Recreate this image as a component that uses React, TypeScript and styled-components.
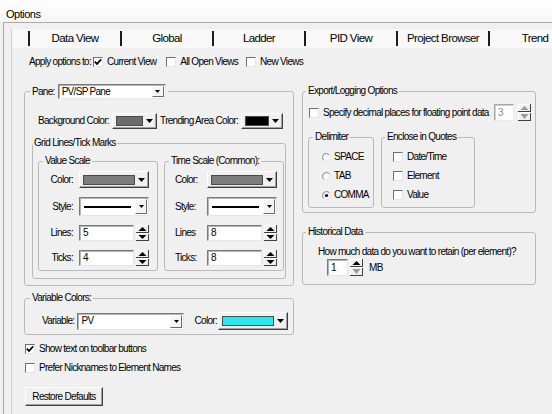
import React from "react";
import styled, { createGlobalStyle } from "styled-components";

const FONT = `"Liberation Sans", Arial, sans-serif`;

const GlobalStyle = createGlobalStyle`
  * { box-sizing: border-box; }
  html, body { margin: 0; padding: 0; }
  body {
    width: 552px;
    height: 414px;
    overflow: hidden;
    background: #f0f0f0;
    color: #000;
    font-family: ${FONT};
    font-size: 10px;
    letter-spacing: -0.7px;
    line-height: 14px;
  }
`;

const Window = styled.div`
  width: 552px;
  height: 414px;
  display: flex;
  flex-direction: column;
  overflow: hidden;
`;

const TitleBar = styled.div`
  flex: none;
  height: 22px;
  padding: 7px 0 0 6px;
  background: linear-gradient(#ffffff, #f6f6f6);
  font-size: 11px;
  letter-spacing: -0.5px;
  line-height: 14px;
`;

const Frame = styled.div`
  flex: 1;
  min-height: 0;
  margin-left: 3px;
  border-top: 1px solid #a9a9a9;
  border-left: 1px solid #a9a9a9;
  padding: 6px 0 0 7px;
  display: flex;
  flex-direction: column;
`;

const TabControl = styled.div`
  flex: 1;
  min-height: 0;
  border-left: 1px solid #cfcfcf;
  display: flex;
  flex-direction: column;
`;

const TabStrip = styled.div`
  flex: none;
  height: 19px;
  display: flex;
  padding-left: 16px;
  background: #f8f8f8;
  overflow: hidden;
  white-space: nowrap;
`;

const Tab = styled.div`
  flex: none;
  width: 92px;
  height: 15px;
  margin-top: 2px;
  border-left: 2px solid #1c1c1c;
  font-size: 11.5px;
  letter-spacing: -0.6px;
  line-height: 15px;
  text-align: center;
`;

const Page = styled.div`
  flex: 1;
  padding-top: 7px;
`;

const ApplyRow = styled.div`
  height: 14px;
  display: flex;
  align-items: center;
  padding-left: 17px;
`;

const CheckItem = styled.label<{ $ml?: number }>`
  display: inline-flex;
  align-items: center;
  gap: 4px;
  height: 14px;
  margin-left: ${(p) => p.$ml ?? 0}px;
  white-space: nowrap;
`;

const Box = styled.span`
  flex: none;
  width: 10px;
  height: 10px;
  display: inline-flex;
  align-items: center;
  justify-content: center;
  background: #fff;
  border: 1px solid;
  border-color: #6e6e6e #e4e4e4 #e4e4e4 #6e6e6e;
`;

const Columns = styled.div`
  display: flex;
  gap: 8px;
  margin-top: 15px;
  padding-left: 12px;
`;

const Column = styled.div<{ $w: number }>`
  flex: none;
  width: ${(p) => p.$w}px;
  display: flex;
  flex-direction: column;
`;

const Group = styled.fieldset<{ $w?: number; $mt?: number }>`
  flex: none;
  margin: ${(p) => p.$mt ?? 0}px 0 0 0;
  padding: 0;
  min-width: 0;
  ${(p) => (p.$w ? `width: ${p.$w}px;` : "")}
  border: 1px solid #bababa;
  border-radius: 3px;
`;

const Legend = styled.legend<{ $ml: number; $pad?: number }>`
  margin-left: ${(p) => p.$ml}px;
  padding: 0 ${(p) => p.$pad ?? 2}px;
  line-height: 14px;
  white-space: nowrap;
`;

const LegendRow = styled.span`
  display: flex;
  align-items: center;
  gap: 3px;
  height: 15px;
`;

const PaneBody = styled.div`
  padding: 14px 7px 6px 7px;
`;

const BgRow = styled.div`
  height: 16px;
  display: flex;
  align-items: center;
  padding: 0 3px 0 6px;
`;

const InlineLabel = styled.span<{ $ml?: number; $mr?: number; $push?: boolean }>`
  white-space: nowrap;
  margin-left: ${(p) => (p.$push ? "auto" : `${p.$ml ?? 0}px`)};
  margin-right: ${(p) => p.$mr ?? 0}px;
`;

const GridBody = styled.div`
  display: flex;
  gap: 6px;
  padding: 4px 3px 7px 5px;
`;

const ScaleBody = styled.div<{ $labelW: number }>`
  display: grid;
  grid-template-columns: ${(p) => p.$labelW}px 70px;
  column-gap: 6px;
  row-gap: 9px;
  align-items: center;
  padding: 3px 0 4px 0;
`;

const RowLabel = styled.span<{ $align: "left" | "right" }>`
  white-space: nowrap;
  text-align: ${(p) => p.$align};
  padding-left: ${(p) => (p.$align === "left" ? 10 : 0)}px;
`;

const ColorButton = styled.div<{ $w: number; $h: number }>`
  flex: none;
  width: ${(p) => p.$w}px;
  height: ${(p) => p.$h}px;
  display: flex;
  align-items: center;
  padding-left: 3px;
  background: #f0f0f0;
  border: 1px solid;
  border-color: #ffffff #404040 #404040 #ffffff;
  box-shadow: inset -1px -1px 0 #a0a0a0;
`;

const Swatch = styled.span<{ $c: string }>`
  flex: 1;
  height: 10px;
  background: ${(p) => p.$c};
  border: 1px solid #4a4a4a;
`;

const ArrowCell = styled.span`
  flex: none;
  width: 13px;
  display: flex;
  justify-content: center;
`;

const Combo = styled.div<{ $w: number; $h: number }>`
  flex: none;
  width: ${(p) => p.$w}px;
  height: ${(p) => p.$h}px;
  display: flex;
  align-items: center;
  background: #fff;
  border: 1px solid;
  border-color: #7a7a7a #e6e6e6 #e6e6e6 #7a7a7a;
  box-shadow: inset 1px 1px 0 #b4b4b4;
  padding: 1px 1px 1px 3px;
`;

const ComboText = styled.span`
  flex: 1;
  min-width: 0;
  white-space: nowrap;
  overflow: hidden;
`;

const LineSample = styled.span`
  flex: 1;
  height: 2px;
  margin: 0 4px 0 1px;
  background: #000;
`;

const DropBtn = styled.span`
  flex: none;
  width: 12px;
  align-self: stretch;
  display: flex;
  align-items: center;
  justify-content: center;
  background: #f4f4f4;
  border: 1px solid;
  border-color: #ffffff #6a6a6a #6a6a6a #ffffff;
`;

const SpinGroup = styled.div<{ $gap?: number; $auto?: boolean }>`
  display: flex;
  align-items: center;
  gap: ${(p) => p.$gap ?? 2}px;
  ${(p) => (p.$auto ? "margin-left: auto;" : "")}
`;

const Field = styled.div<{ $w: number; $h: number; $disabled?: boolean }>`
  flex: none;
  width: ${(p) => p.$w}px;
  height: ${(p) => p.$h}px;
  background: #fff;
  border: 1px solid;
  border-color: ${(p) => (p.$disabled ? "#a8a8a8 #ececec #ececec #a8a8a8" : "#7a7a7a #e6e6e6 #e6e6e6 #7a7a7a")};
  box-shadow: inset 1px 1px 0 ${(p) => (p.$disabled ? "#d0d0d0" : "#b4b4b4")};
  padding-left: 3px;
  line-height: ${(p) => p.$h - 2}px;
  color: ${(p) => (p.$disabled ? "#8a8a8a" : "#000")};
`;

const SpinBox = styled.span`
  flex: none;
  display: inline-flex;
`;

const VarBody = styled.div`
  height: 29px;
  display: flex;
  align-items: center;
  padding: 7px 5px 4px 17px;
`;

const CheckList = styled.div`
  display: flex;
  flex-direction: column;
  gap: 5px;
  margin-top: 7px;
  padding-left: 1px;
`;

const PushButton = styled.button`
  width: 78px;
  height: 19px;
  margin: 12px 0 0 1px;
  padding: 0;
  font: inherit;
  letter-spacing: inherit;
  white-space: nowrap;
  color: #000;
  background: #f0f0f0;
  border: 1px solid;
  border-color: #ffffff #404040 #404040 #ffffff;
  box-shadow: inset -1px -1px 0 #a0a0a0;
`;

const ExportBody = styled.div`
  padding: 6px 0 4px 5px;
`;

const DecimalRow = styled.div`
  height: 17px;
  display: flex;
  align-items: center;
  padding: 0 4px 0 1px;
`;

const SubGroups = styled.div`
  display: flex;
  gap: 7px;
  margin-top: 9px;
`;

const SubBody = styled.div<{ $pl: number }>`
  display: flex;
  flex-direction: column;
  gap: 5px;
  padding: 6px 0 5px ${(p) => p.$pl}px;
`;

const OptionRow = styled.div`
  height: 14px;
  display: flex;
  align-items: center;
  gap: 3px;
  white-space: nowrap;
`;

const HistBody = styled.div`
  padding: 6px 0 8px 15px;
`;

const HistText = styled.div`
  height: 14px;
  white-space: nowrap;
`;

const HistSpinRow = styled.div`
  height: 17px;
  display: flex;
  align-items: center;
  gap: 2px;
  padding-left: 9px;
`;

/* ---------- drawings ---------- */

const Tri = ({ w = 7, h = 4, color = "#000" }: { w?: number; h?: number; color?: string }) => (
  <svg width={w} height={h} viewBox={`0 0 ${w} ${h}`} style={{ display: "block" }}>
    <polygon points={`0,0 ${w},0 ${w / 2},${h}`} fill={color} />
  </svg>
);

const CheckMark = () => (
  <svg width="8" height="8" viewBox="0 0 8 8" style={{ display: "block" }}>
    <path d="M0.8 3.6 L3 5.9 L7.2 1.4" stroke="#000" strokeWidth="1.7" fill="none" />
  </svg>
);

const Checkbox = ({ checked }: { checked?: boolean }) => <Box>{checked && <CheckMark />}</Box>;

const Radio = ({ checked }: { checked?: boolean }) => (
  <svg width="9" height="9" viewBox="0 0 9 9" style={{ display: "block", flex: "none" }}>
    <circle cx="4.5" cy="4.5" r="4" fill="#f7f7f7" />
    <path d="M7.33 1.67 A4 4 0 0 0 1.67 7.33" stroke="#7e7e7e" strokeWidth="1" fill="none" />
    <path d="M1.67 7.33 A4 4 0 0 0 7.33 1.67" stroke="#e2e2e2" strokeWidth="1" fill="none" />
    {checked && <circle cx="4.5" cy="4.5" r="1.6" fill="#000" />}
  </svg>
);

const Spinner = ({ h = 16, up = "#000", down = "#000" }: { h?: number; up?: string; down?: string }) => {
  const mid = Math.floor(h / 2);
  return (
    <SpinBox>
      <svg width="13" height={h} viewBox={`0 0 13 ${h}`} style={{ display: "block" }}>
        <rect x="0" y="0" width="13" height={h} fill="#f0f0f0" />
        <line x1="0" y1="0.5" x2="13" y2="0.5" stroke="#ffffff" />
        <line x1="0.5" y1="0" x2="0.5" y2={h} stroke="#ffffff" />
        <line x1="12.5" y1="0" x2="12.5" y2={h} stroke="#404040" />
        <line x1="0" y1={mid - 0.5} x2="13" y2={mid - 0.5} stroke="#404040" />
        <line x1="0" y1={mid + 0.5} x2="13" y2={mid + 0.5} stroke="#ffffff" />
        <line x1="0" y1={h - 0.5} x2="13" y2={h - 0.5} stroke="#404040" />
        <polygon points={`2.5,${mid - 2} 10.5,${mid - 2} 6.5,2`} fill={up} />
        <polygon points={`2.5,${mid + 2} 10.5,${mid + 2} 6.5,${h - 2}`} fill={down} />
      </svg>
    </SpinBox>
  );
};

const ColorPick = ({ w, h, color }: { w: number; h: number; color: string }) => (
  <ColorButton $w={w} $h={h}>
    <Swatch $c={color} />
    <ArrowCell>
      <Tri />
    </ArrowCell>
  </ColorButton>
);

const DropList = ({ w, h, children }: { w: number; h: number; children: React.ReactNode }) => (
  <Combo $w={w} $h={h}>
    {children}
    <DropBtn>
      <Tri w={5} h={3} />
    </DropBtn>
  </Combo>
);

type ScaleProps = {
  title: string;
  labelW: number;
  align: "left" | "right";
  linesLabel: string;
  lines: string;
  ticks: string;
};

const ScaleGroup = ({ title, labelW, align, linesLabel, lines, ticks }: ScaleProps) => (
  <Group $w={120}>
    <Legend $ml={4}>{title}</Legend>
    <ScaleBody $labelW={labelW}>
      <RowLabel $align={align}>Color:</RowLabel>
      <ColorPick w={70} h={17} color="#7d7d7d" />
      <RowLabel $align={align}>Style:</RowLabel>
      <DropList w={70} h={19}>
        <LineSample />
      </DropList>
      <RowLabel $align={align}>{linesLabel}</RowLabel>
      <SpinGroup>
        <Field $w={55} $h={16}>{lines}</Field>
        <Spinner />
      </SpinGroup>
      <RowLabel $align={align}>Ticks:</RowLabel>
      <SpinGroup>
        <Field $w={55} $h={16}>{ticks}</Field>
        <Spinner />
      </SpinGroup>
    </ScaleBody>
  </Group>
);

const tabs = ["Data View", "Global", "Ladder", "PID View", "Project Browser", "Trend"];

export default function App() {
  return (
    <>
      <GlobalStyle />
      <Window>
        <TitleBar>Options</TitleBar>
        <Frame>
          <TabControl>
            <TabStrip>
              {tabs.map((t) => (
                <Tab key={t}>{t}</Tab>
              ))}
            </TabStrip>
            <Page>
              <ApplyRow>
                <InlineLabel $mr={2}>Apply options to:</InlineLabel>
                <CheckItem>
                  <Checkbox checked />
                  Current View
                </CheckItem>
                <CheckItem $ml={10}>
                  <Checkbox />
                  All Open Views
                </CheckItem>
                <CheckItem $ml={8}>
                  <Checkbox />
                  New Views
                </CheckItem>
              </ApplyRow>

              <Columns>
                <Column $w={270}>
                  <Group>
                    <Legend $ml={5}>
                      <LegendRow>
                        Pane:
                        <DropList w={108} h={15}>
                          <ComboText>PV/SP Pane</ComboText>
                        </DropList>
                      </LegendRow>
                    </Legend>
                    <PaneBody>
                      <BgRow>
                        <InlineLabel $mr={3}>Background Color:</InlineLabel>
                        <ColorPick w={45} h={16} color="#6b6b6b" />
                        <InlineLabel $push $mr={3}>Trending Area Color:</InlineLabel>
                        <ColorPick w={42} h={16} color="#000000" />
                      </BgRow>
                      <Group $mt={7}>
                        <Legend $ml={0} $pad={1}>Grid Lines/Tick Marks</Legend>
                        <GridBody>
                          <ScaleGroup title="Value Scale" labelW={34} align="right" linesLabel="Lines:" lines="5" ticks="4" />
                          <ScaleGroup title="Time Scale (Common):" labelW={36} align="left" linesLabel="Lines" lines="8" ticks="8" />
                        </GridBody>
                      </Group>
                    </PaneBody>
                  </Group>

                  <Group $mt={5}>
                    <Legend $ml={5}>Variable Colors:</Legend>
                    <VarBody>
                      <InlineLabel $mr={3}>Variable:</InlineLabel>
                      <DropList w={107} h={17}>
                        <ComboText>PV</ComboText>
                      </DropList>
                      <InlineLabel $push $mr={1}>Color:</InlineLabel>
                      <ColorPick w={70} h={18} color="#2ae6ef" />
                    </VarBody>
                  </Group>

                  <CheckList>
                    <CheckItem>
                      <Checkbox checked />
                      Show text on toolbar buttons
                    </CheckItem>
                    <CheckItem>
                      <Checkbox />
                      Prefer Nicknames to Element Names
                    </CheckItem>
                  </CheckList>

                  <PushButton type="button">Restore Defaults</PushButton>
                </Column>

                <Column $w={234}>
                  <Group>
                    <Legend $ml={3}>Export/Logging Options</Legend>
                    <ExportBody>
                      <DecimalRow>
                        <CheckItem>
                          <Checkbox />
                          Specify decimal places for floating point data
                        </CheckItem>
                        <SpinGroup $gap={4} $auto>
                          <Field $w={20} $h={17} $disabled>3</Field>
                          <Spinner h={17} up="#9a9a9a" down="#9a9a9a" />
                        </SpinGroup>
                      </DecimalRow>
                      <SubGroups>
                        <Group $w={66}>
                          <Legend $ml={4}>Delimiter</Legend>
                          <SubBody $pl={13}>
                            <OptionRow>
                              <Radio />
                              SPACE
                            </OptionRow>
                            <OptionRow>
                              <Radio />
                              TAB
                            </OptionRow>
                            <OptionRow>
                              <Radio checked />
                              COMMA
                            </OptionRow>
                          </SubBody>
                        </Group>
                        <Group $w={94}>
                          <Legend $ml={3}>Enclose in Quotes</Legend>
                          <SubBody $pl={11}>
                            <CheckItem>
                              <Checkbox />
                              Date/Time
                            </CheckItem>
                            <CheckItem>
                              <Checkbox />
                              Element
                            </CheckItem>
                            <CheckItem>
                              <Checkbox />
                              Value
                            </CheckItem>
                          </SubBody>
                        </Group>
                      </SubGroups>
                    </ExportBody>
                  </Group>

                  <Group $mt={12}>
                    <Legend $ml={3}>Historical Data</Legend>
                    <HistBody>
                      <HistText>How much data do you want to retain (per element)?</HistText>
                      <HistSpinRow>
                        <Field $w={21} $h={17}>1</Field>
                        <Spinner h={17} up="#000" down="#9a9a9a" />
                        <InlineLabel $ml={4}>MB</InlineLabel>
                      </HistSpinRow>
                    </HistBody>
                  </Group>
                </Column>
              </Columns>
            </Page>
          </TabControl>
        </Frame>
      </Window>
    </>
  );
}
